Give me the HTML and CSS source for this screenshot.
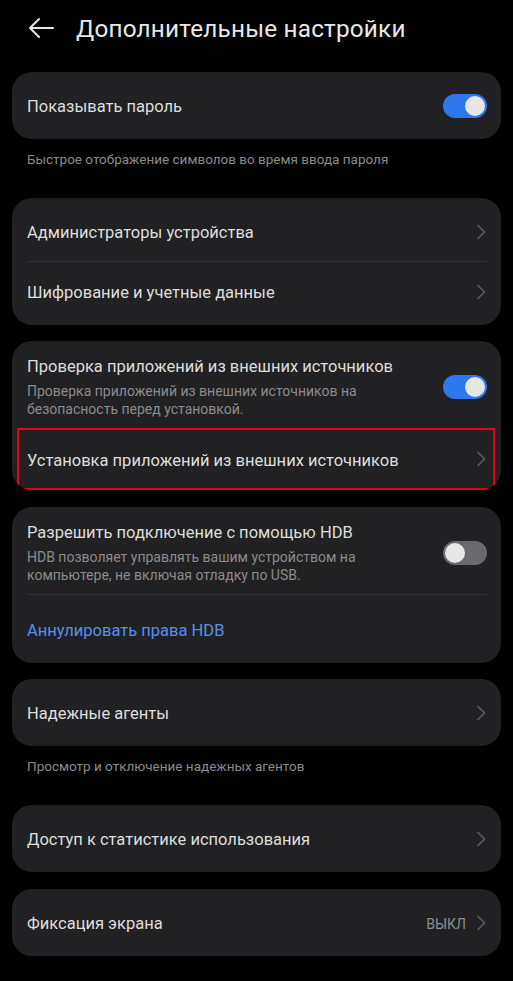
FILE: index.html
```html
<!DOCTYPE html>
<html lang="ru">
<head>
    <meta charset="UTF-8">
    <meta name="viewport" content="width=device-width, initial-scale=1.0">
    <title>Дополнительные настройки</title>
    <link rel="stylesheet" href="styles.css">
</head>
<body>
    <header class="top-bar">
        <svg class="back" width="26" height="22" viewBox="0 0 26 22">
            <path d="M25 11H2M11 2L2 11l9 9" fill="none" stroke="#e6e6e6" stroke-width="2" stroke-linecap="round" stroke-linejoin="round"/>
        </svg>
        <h1>Дополнительные настройки</h1>
    </header>

    <div class="card">
        <div class="row">
            <div class="label">Показывать пароль</div>
            <div class="switch on"></div>
        </div>
    </div>
    <p class="note">Быстрое отображение символов во время ввода пароля</p>

    <div class="card list">
        <div class="row">
            <div class="label">Администраторы устройства</div>
            <svg class="chev" width="10" height="16" viewBox="0 0 10 16"><path d="M1.5 1l7 7-7 7" fill="none" stroke="#5c5c5e" stroke-width="1.6"/></svg>
        </div>
        <div class="divider"></div>
        <div class="row">
            <div class="label">Шифрование и учетные данные</div>
            <svg class="chev" width="10" height="16" viewBox="0 0 10 16"><path d="M1.5 1l7 7-7 7" fill="none" stroke="#5c5c5e" stroke-width="1.6"/></svg>
        </div>
    </div>

    <div class="card gap-s">
        <div class="row tall">
            <div class="text">
                <div class="title">Проверка приложений из внешних источников</div>
                <div class="sub">Проверка приложений из внешних источников на безопасность перед установкой.</div>
            </div>
            <div class="switch on"></div>
        </div>
        <div class="row marked">
            <div class="label">Установка приложений из внешних источников</div>
            <svg class="chev" width="10" height="16" viewBox="0 0 10 16"><path d="M1.5 1l7 7-7 7" fill="none" stroke="#5c5c5e" stroke-width="1.6"/></svg>
        </div>
    </div>

    <div class="card gap">
        <div class="row tall">
            <div class="text">
                <div class="title">Разрешить подключение с помощью HDB</div>
                <div class="sub">HDB позволяет управлять вашим устройством на компьютере, не включая отладку по USB.</div>
            </div>
            <div class="switch"></div>
        </div>
        <div class="divider"></div>
        <div class="row link-row">
            <div class="label link">Аннулировать права HDB</div>
        </div>
    </div>

    <div class="card gap-s">
        <div class="row">
            <div class="label">Надежные агенты</div>
            <svg class="chev" width="10" height="16" viewBox="0 0 10 16"><path d="M1.5 1l7 7-7 7" fill="none" stroke="#5c5c5e" stroke-width="1.6"/></svg>
        </div>
    </div>
    <p class="note">Просмотр и отключение надежных агентов</p>

    <div class="card">
        <div class="row">
            <div class="label">Доступ к статистике использования</div>
            <svg class="chev" width="10" height="16" viewBox="0 0 10 16"><path d="M1.5 1l7 7-7 7" fill="none" stroke="#5c5c5e" stroke-width="1.6"/></svg>
        </div>
    </div>

    <div class="card gap">
        <div class="row">
            <div class="label">Фиксация экрана</div>
            <span class="value">ВЫКЛ</span>
            <svg class="chev" width="10" height="16" viewBox="0 0 10 16"><path d="M1.5 1l7 7-7 7" fill="none" stroke="#5c5c5e" stroke-width="1.6"/></svg>
        </div>
    </div>
</body>
</html>
```

FILE: styles.css
```css
body {
    margin: 0;
    background: #000;
    color: #dedede;
    font-family: Roboto, "Noto Sans", sans-serif;
}

.top-bar {
    display: flex;
    align-items: center;
    height: 56px;
    padding-left: 28px;
    margin-bottom: 16px;
}

.back {
    flex: none;
}

h1 {
    margin: 0 0 0 22px;
    font-size: 24.3px;
    font-weight: 400;
    color: #e8e8e8;
    letter-spacing: 0.2px;
}

.card {
    margin: 0 12px;
    background: #212123;
    border-radius: 20px;
    overflow: hidden;
}

.card.list {
    padding: 4px 0;
}

.card.gap-s {
    margin-top: 16px;
}

.card.gap {
    margin-top: 17px;
}

.row {
    display: flex;
    align-items: center;
    height: 67px;
    padding: 0 14px 0 15px;
}

.card.list .row {
    height: 59px;
}

.row.tall {
    height: auto;
    padding-top: 15px;
    padding-bottom: 10px;
}

.row.marked {
    box-sizing: border-box;
    height: 62px;
    margin: 0 6px 0 5px;
    padding: 0 6px 0 8px;
    border: 2px solid #e4000f;
}

.row.link-row {
    height: 68px;
}

.text {
    flex: 1;
    padding-right: 40px;
}

.label {
    flex: 1;
    padding-top: 3px;
    font-size: 16.5px;
    line-height: 22px;
}

.title {
    height: 22px;
    font-size: 16.5px;
    line-height: 22px;
}

.sub {
    height: 36px;
    margin-top: 4px;
    font-size: 14px;
    line-height: 18px;
    color: #8b8b8b;
}

.link {
    color: #5b8def;
}

.value {
    padding-top: 2px;
    font-size: 14px;
    color: #8b8b8b;
    margin-right: 10px;
}

.divider {
    height: 1px;
    margin: 0 14px 0 15px;
    background: #333336;
}

.chev {
    flex: none;
    margin-right: 1px;
}

.switch {
    flex: none;
    position: relative;
    width: 44px;
    height: 24px;
    border-radius: 12px;
    background: #6a6a6c;
}

.switch::after {
    content: '';
    position: absolute;
    top: 2px;
    left: 2px;
    width: 20px;
    height: 20px;
    border-radius: 50%;
    background: #e6e6e6;
}

.switch.on {
    background: #2d77ef;
}

.switch.on::after {
    left: 22px;
}

.note {
    margin: 0;
    padding: 11px 27px 29px;
    font-size: 13.5px;
    line-height: 19px;
    color: #8b8b8b;
}

.card + .note + .card {
    margin-top: 0;
}
```
